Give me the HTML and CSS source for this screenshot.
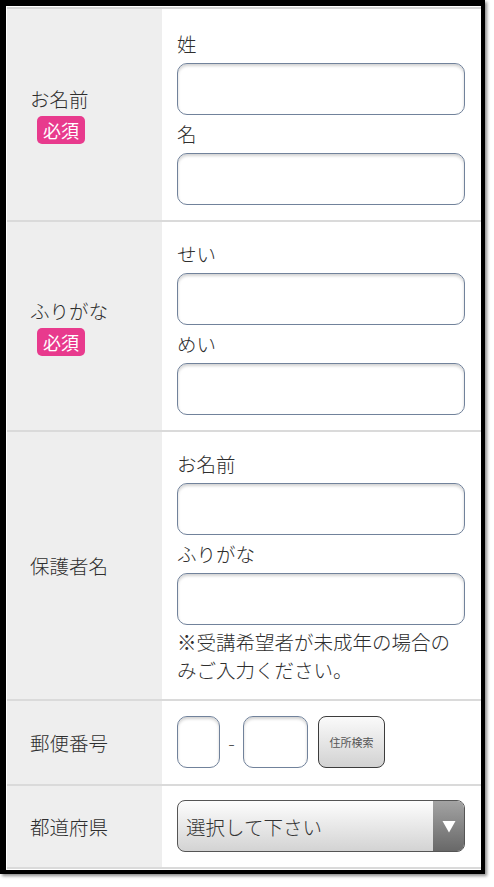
FILE: index.html
```html
<!DOCTYPE html>
<html lang="ja">
<head>
<meta charset="utf-8">
<title>フォーム</title>
<link rel="stylesheet" href="styles.css">
</head>
<body>
<div class="frame">
  <div class="form">
    <div class="row row-first">
      <div class="th">
        <div class="th-inner">
          <span class="th-text">お名前</span>
          <span class="badge">必須</span>
        </div>
      </div>
      <div class="td">
        <div class="field-label">姓</div>
        <input class="text" type="text">
        <div class="field-label">名</div>
        <input class="text" type="text">
      </div>
    </div>
    <div class="row">
      <div class="th">
        <div class="th-inner">
          <span class="th-text">ふりがな</span>
          <span class="badge">必須</span>
        </div>
      </div>
      <div class="td">
        <div class="field-label">せい</div>
        <input class="text" type="text">
        <div class="field-label">めい</div>
        <input class="text" type="text">
      </div>
    </div>
    <div class="row">
      <div class="th">
        <div class="th-inner">
          <span class="th-text">保護者名</span>
        </div>
      </div>
      <div class="td">
        <div class="field-label">お名前</div>
        <input class="text" type="text">
        <div class="field-label">ふりがな</div>
        <input class="text" type="text">
        <p class="note">※受講希望者が未成年の場合のみご入力ください。</p>
      </div>
    </div>
    <div class="row">
      <div class="th">
        <div class="th-inner">
          <span class="th-text">郵便番号</span>
        </div>
      </div>
      <div class="td td-zip">
        <input class="text zip1" type="text">
        <span class="dash">-</span>
        <input class="text zip2" type="text">
        <button class="search" type="button">住所検索</button>
      </div>
    </div>
    <div class="row">
      <div class="th">
        <div class="th-inner">
          <span class="th-text">都道府県</span>
        </div>
      </div>
      <div class="td td-select">
        <div class="select">
          <span class="select-text">選択して下さい</span>
          <span class="select-arrow">
            <svg width="14" height="13" viewBox="0 0 14 13"><polygon points="0.5,1 13.5,1 7,12.5" fill="#fff"/></svg>
          </span>
        </div>
      </div>
    </div>
  </div>
</div>
</body>
</html>
```
FILE: styles.css
```css
html, body {
  margin: 0;
  padding: 0;
  background: #fff;
}

body {
  width: 494px;
  height: 887px;
  font-family: "Noto Sans CJK JP", "Noto Sans", sans-serif;
  font-weight: 300;
  color: #2e2e2e;
}

.frame {
  box-sizing: border-box;
  width: 485px;
  height: 874px;
  border-style: solid;
  border-color: #000;
  border-width: 6px 4px 4px 6px;
  box-shadow: 2px 2px 3px rgba(0, 0, 0, 0.45);
  background: #fff;
  padding: 1px 0 0 1px;
  overflow: hidden;
}

.form {
  display: flex;
  flex-direction: column;
}

.row {
  display: grid;
  grid-template-columns: 155px 1fr;
  border-bottom: 2px solid #dadada;
}

.row-first {
  border-top: 2px solid #d6d6d6;
}

.th {
  background: #eeeeee;
  display: flex;
  align-items: center;
  padding-left: 23px;
}

.th-inner {
  display: flex;
  flex-direction: column;
  align-items: flex-start;
}

.th-text {
  font-size: 19.5px;
  line-height: 28px;
}

.badge {
  margin: 3px 0 0 7px;
  height: 28px;
  line-height: 28px;
  padding: 0 6px;
  background: #e83a8d;
  color: #fff;
  font-size: 18px;
  font-weight: 400;
  border-radius: 5px;
}

.td {
  display: flex;
  flex-direction: column;
  padding: 18px 16px 15px 15px;
}

.row-first .td {
  padding-top: 21px;
}

.field-label {
  font-size: 19.5px;
  line-height: 28px;
  margin-top: 5px;
}

.field-label:first-child {
  margin-top: 0;
}

.text {
  appearance: none;
  -webkit-appearance: none;
  display: block;
  box-sizing: border-box;
  width: 100%;
  height: 52px;
  margin: 5px 0 0 0;
  padding: 0 8px;
  border: 1px solid #71829b;
  border-radius: 10px;
  background: #fff;
  box-shadow: inset 0 2px 3px rgba(0, 0, 0, 0.18);
  font-family: inherit;
  font-size: 19.5px;
  outline: none;
}

.note {
  margin: 3px 0 0 0;
  font-size: 19.5px;
  line-height: 28px;
}

.td-zip {
  flex-direction: row;
  align-items: center;
  padding: 15px 16px 16px 15px;
}

.td-zip .text {
  margin: 0;
}

.zip1 {
  width: 43px;
  flex: none;
}

.zip2 {
  width: 65px;
  flex: none;
}

.dash {
  width: 23px;
  text-align: center;
  font-size: 19.5px;
  color: #555;
}

.search {
  box-sizing: border-box;
  margin-left: 10px;
  width: 67px;
  height: 52px;
  padding: 0;
  border: 1px solid #3c3c3c;
  border-radius: 8px;
  background: linear-gradient(#fafafa, #d2d2d2);
  color: #555;
  font-family: inherit;
  font-weight: 400;
  font-size: 11px;
}

.td-select {
  padding: 14px 16px 15px 15px;
}

.select {
  box-sizing: border-box;
  display: flex;
  align-items: stretch;
  height: 52px;
  border: 1px solid #555;
  border-radius: 8px;
  overflow: hidden;
  background: linear-gradient(#fdfdfd, #d3d3d3);
}

.select-text {
  flex: 1;
  display: flex;
  align-items: center;
  padding-left: 8px;
  font-size: 19.5px;
  color: #333;
}

.select-arrow {
  width: 31px;
  display: flex;
  align-items: center;
  justify-content: center;
  background: linear-gradient(#a3a3a3, #686868);
}
```
